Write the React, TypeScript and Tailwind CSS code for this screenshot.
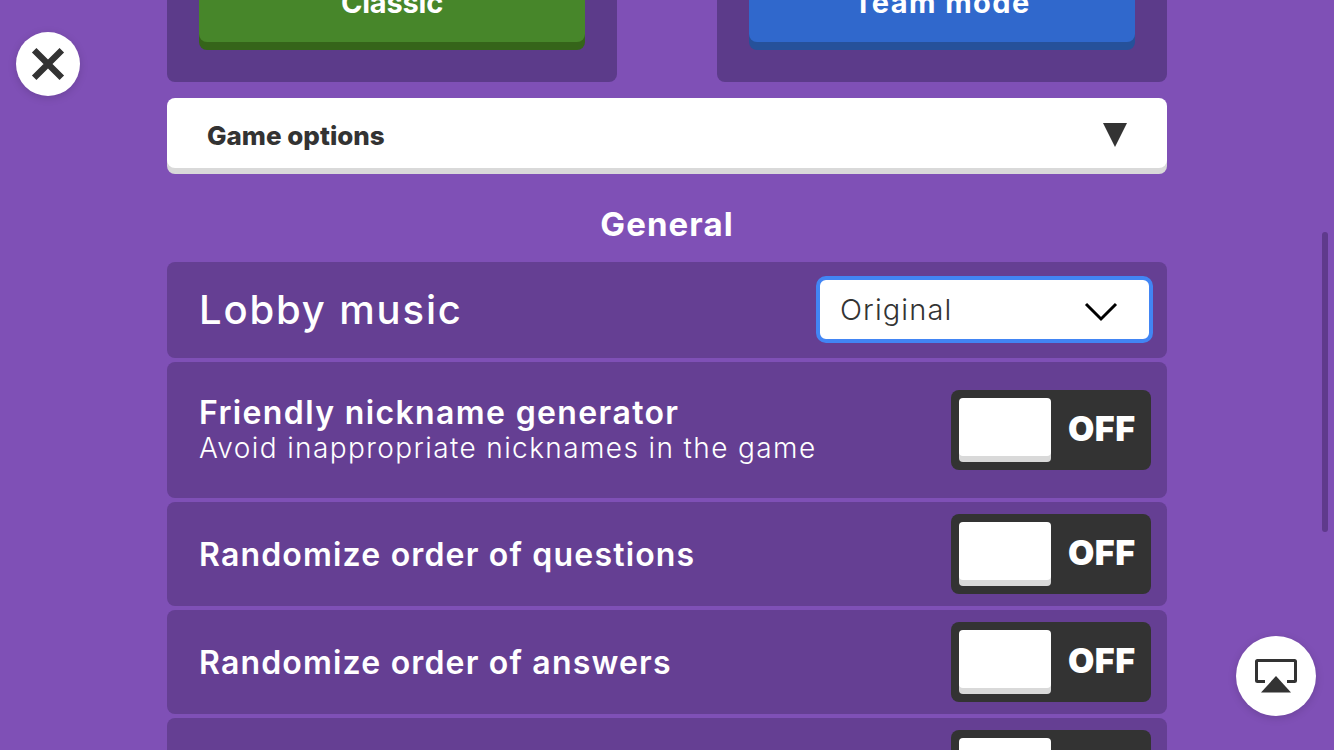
import React from "react";

const font = "[font-family:Inter,'Noto_Sans',sans-serif]";

function Toggle() {
  return (
    <div className="flex h-20 w-[200px] shrink-0 items-start rounded-lg bg-[#333333] p-2">
      <div className="h-[58px] w-[92px] rounded bg-white shadow-[0_6px_0_#d9d9d9]" />
      <span className="ml-[17px] mt-[11px] text-[34px] leading-10 font-black tracking-[0.5px] text-white">OFF</span>
    </div>
  );
}

function Row({ title, sub, h, tracking }: { title: string; sub?: string; h: string; tracking: string }) {
  return (
    <div className={`flex items-center justify-between rounded-lg bg-[#653f93] pl-8 pr-4 ${h}`}>
      <div className={sub ? "text-white" : "pt-[2px] text-white"}>
        <div className={`text-[32px] leading-9 font-semibold ${tracking}`}>{title}</div>
        {sub && <div className="text-[28px] leading-[34px] font-light tracking-[1.39px]">{sub}</div>}
      </div>
      <Toggle />
    </div>
  );
}

function ModeCard({ label, face, tracking }: { label: string; face: string; tracking: string }) {
  return (
    <div className="flex h-[182px] w-[450px] items-start rounded-lg bg-[#5c3b8a] px-8 pt-8">
      <div className={`flex h-[110px] w-full items-end justify-center rounded-lg pb-[21px] text-[29px] leading-9 font-bold text-white ${face} ${tracking}`}>
        {label}
      </div>
    </div>
  );
}

export default function App() {
  return (
    <div className={`relative h-[750px] w-[1334px] overflow-hidden bg-[#7f50b6] ${font}`}>
      <div className="mx-auto -mt-[100px] flex w-[1000px] flex-col">
        <div className="flex justify-between">
          <ModeCard label="Classic" face="bg-[#47862a] shadow-[0_8px_0_#356419]" tracking="tracking-[-0.2px]" />
          <ModeCard label="Team mode" face="bg-[#3068cc] shadow-[0_8px_0_#26519a]" tracking="tracking-[1.4px]" />
        </div>

        <div className="mt-4 mb-[6px] flex h-[70px] items-center justify-between rounded-lg bg-white px-10 pt-1 shadow-[0_6px_0_#d9d9d9]">
          <span className="text-[26px] font-extrabold text-[#333333]">Game options</span>
          <svg width="24" height="26" viewBox="0 0 24 26" className="mt-[2px]">
            <path d="M0 0H24L12 24Z" fill="#333333" />
          </svg>
        </div>

        <h2 className="mt-[30px] mb-[18px] text-center text-[33px] leading-10 font-bold tracking-[1.1px] text-white">General</h2>

        <div className="flex flex-col gap-1">
          <div className="flex h-24 items-center justify-between rounded-lg bg-[#653f93] pl-8 pr-[14px]">
            <span className="text-[40px] font-medium tracking-[1.85px] text-white">Lobby music</span>
            <div className="-mt-px flex h-[67px] w-[337px] items-center justify-between rounded-[10px] border-4 border-[#4285f4] bg-white pl-5 pr-[31px]">
              <span className="text-[29px] font-light tracking-[1.1px] text-[#333333]">Original</span>
              <svg width="34" height="20" viewBox="0 0 34 20" className="mt-[5px]">
                <path d="M2 2L17 17L32 2" fill="none" stroke="#000000" strokeWidth="3" />
              </svg>
            </div>
          </div>
          <Row title="Friendly nickname generator" sub="Avoid inappropriate nicknames in the game" h="h-[136px]" tracking="tracking-[1.37px]" />
          <Row title="Randomize order of questions" h="h-[104px]" tracking="tracking-[1.18px]" />
          <Row title="Randomize order of answers" h="h-[104px]" tracking="tracking-[1.18px]" />
          <Row title="Show question and answers" h="h-[104px]" tracking="tracking-[1.18px]" />
        </div>
      </div>

      <button className="absolute left-4 top-8 flex h-16 w-16 items-center justify-center rounded-full bg-white shadow-[0_2px_8px_rgba(0,0,0,0.15)]">
        <svg width="34" height="34" viewBox="0 0 32 32">
          <path d="M3 3L29 29M29 3L3 29" stroke="#333333" strokeWidth="6" />
        </svg>
      </button>

      <button className="absolute left-[1236px] top-[636px] flex h-20 w-20 items-center justify-center rounded-full bg-white shadow-[0_2px_8px_rgba(0,0,0,0.15)]">
        <svg width="44" height="34" viewBox="0 0 44 34">
          <path d="M11 22.5H3.5a1 1 0 0 1-1-1V2.5a1 1 0 0 1 1-1h37a1 1 0 0 1 1 1v19a1 1 0 0 1-1 1H33" fill="none" stroke="#333333" strokeWidth="3" />
          <path d="M22 17L37 33.5H7Z" fill="#333333" />
        </svg>
      </button>

      <div className="absolute left-[1322px] top-[232px] h-[300px] w-[6px] rounded-full bg-[#5f3a8c]" />
    </div>
  );
}
